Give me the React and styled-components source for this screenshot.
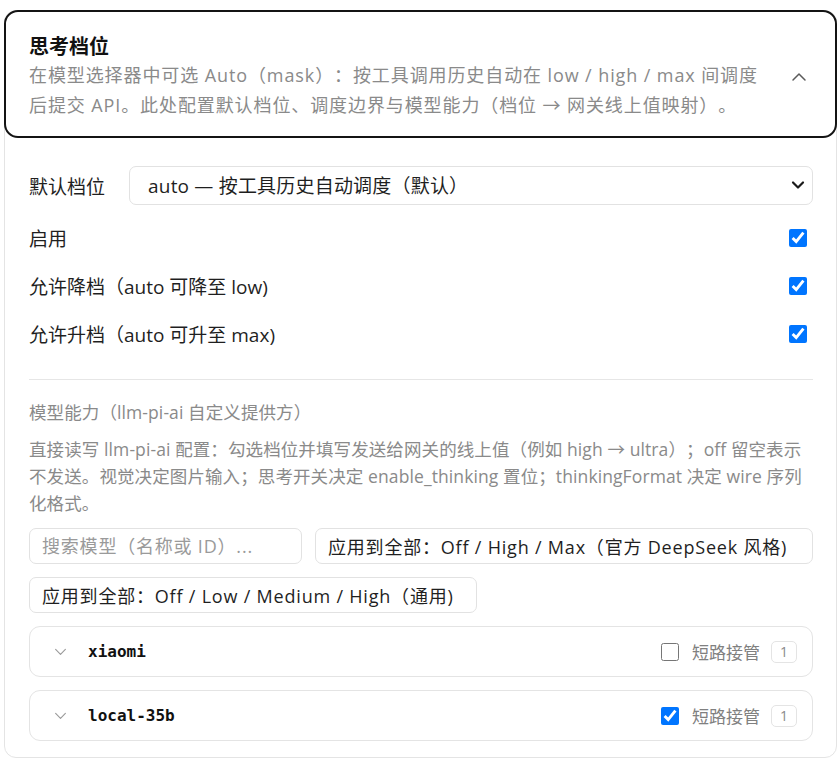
import React from 'react'
import styled, { createGlobalStyle } from 'styled-components'

const GlobalStyle = createGlobalStyle`
  body {
    margin: 0;
    background: #fff;
    font-family: "Open Sans", "Noto Sans CJK SC", sans-serif;
    color: #1f1f1f;
    text-spacing-trim: space-all;
  }
  * { box-sizing: border-box; }
`

const Page = styled.div`
  padding: 10px 3px 5px 4px;
`

const Card = styled.section`
  border: 1px solid #e4e4e4;
  border-radius: 12px;
  background: #fff;
`

const Header = styled.button`
  display: flex;
  align-items: center;
  gap: 16px;
  width: calc(100% + 2px);
  margin: -1px -1px 0;
  padding: 22px 28px 16px 23px;
  border: 2px solid #141414;
  border-radius: 14px;
  background: #fff;
  text-align: left;
  font: inherit;
  text-spacing-trim: space-all;
  cursor: pointer;
`

const HeaderText = styled.div`
  flex: 1;
  min-width: 0;
`

const Title = styled.h2`
  margin: 0;
  font-size: 20px;
  line-height: 26px;
  font-weight: 700;
  color: #111;
`

const Muted = styled.p`
  margin: 0;
  color: #8a8a8a;
  font-size: ${p => p.size || 18}px;
  line-height: ${p => p.lh || 30}px;
  letter-spacing: ${p => p.track || 0}px;
`

const Body = styled.div`
  padding: 28px 23px 16px 24px;
`

const FieldRow = styled.div`
  display: flex;
  align-items: center;
  gap: 24px;
  margin-bottom: 9px;
`

const Label = styled.span`
  font-size: 19px;
  color: #1f1f1f;
  white-space: nowrap;
`

const SelectWrap = styled.div`
  position: relative;
  flex: 1;
`

const Select = styled.select`
  appearance: none;
  width: 100%;
  height: 39px;
  padding: 0 40px 0 18px;
  border: 1px solid #e2e2e2;
  border-radius: 7px;
  background: #fff;
  font: inherit;
  font-size: 19px;
  letter-spacing: 0.2px;
  color: #1f1f1f;
  outline: none;
`

const SelectArrow = styled.svg`
  position: absolute;
  right: 8px;
  top: 14px;
  pointer-events: none;
`

const CheckRow = styled.label`
  display: flex;
  align-items: center;
  justify-content: space-between;
  height: 48px;
  padding-right: 6px;
`

const Check = styled.input`
  width: 18px;
  height: 18px;
  margin: 0;
  accent-color: #0075ff;
`

const Divider = styled.hr`
  border: 0;
  border-top: 1px solid #e6e6e6;
  margin: 21px 0 19px;
`

const Description = styled(Muted)`
  margin: 11px 0 11px;
`

const Controls = styled.div`
  display: flex;
  flex-wrap: wrap;
  gap: 13px;
`

const SearchInput = styled.input`
  width: 273px;
  height: 36px;
  padding: 0 12px;
  border: 1px solid #e2e2e2;
  border-radius: 7px;
  font: inherit;
  font-size: 18px;
  letter-spacing: 0.8px;
  color: #1f1f1f;
  outline: none;

  &::placeholder {
    color: #9a9a9a;
  }
`

const Preset = styled.button`
  flex: ${p => (p.grow ? 1 : '0 0 auto')};
  height: 36px;
  padding: 0 22px 0 12px;
  border: 1px solid #e2e2e2;
  border-radius: 7px;
  background: #fff;
  font: inherit;
  font-size: 18px;
  letter-spacing: 0.8px;
  color: #1f1f1f;
  text-align: left;
  white-space: nowrap;
  cursor: pointer;
`

const Providers = styled.div`
  display: flex;
  flex-direction: column;
  gap: 13px;
  margin-top: 13px;
`

const Provider = styled.div`
  display: flex;
  align-items: center;
  height: 51px;
  padding: 0 15px 0 24px;
  border: 1px solid #e4e4e4;
  border-radius: 11px;
`

const Name = styled.span`
  flex: 1;
  margin-left: 21px;
  font-family: "DejaVu Sans Mono", "Liberation Mono", monospace;
  font-weight: 700;
  font-size: 16px;
  color: #111;
`

const Takeover = styled.label`
  display: flex;
  align-items: center;
  gap: 13px;
  font-size: 17px;
  color: #808080;
`

const Badge = styled.span`
  display: inline-flex;
  align-items: center;
  justify-content: center;
  width: 26px;
  height: 22px;
  margin-left: 11px;
  border: 1px solid #e4e4e4;
  border-radius: 5px;
  font-size: 14px;
  color: #8a8a8a;
`

const Chevron = ({ up, size = 16, color = '#555', width = 1.6 }) => (
  <svg width={size} height={size} viewBox="0 0 16 16" fill="none">
    <path
      d={up ? 'M2 11l6-6 6 6' : 'M2 5.5l6 6 6-6'}
      stroke={color}
      strokeWidth={width}
      strokeLinecap="round"
      strokeLinejoin="round"
    />
  </svg>
)

const providers = [
  { name: 'xiaomi', takeover: false, count: 1 },
  { name: 'local-35b', takeover: true, count: 1 },
]

const App = () => {
  return (
    <Page>
      <GlobalStyle />
      <Card>
        <Header type="button">
          <HeaderText>
            <Title>思考档位</Title>
            <Muted track={0.9}>
              在模型选择器中可选 Auto（mask）：按工具调用历史自动在 low / high / max 间调度后提交 API。此处配置默认档位、调度边界与模型能力（档位 → 网关线上值映射）。
            </Muted>
          </HeaderText>
          <Chevron up size={16} color="#5a5a5a" width={1.5} />
        </Header>

        <Body>
          <FieldRow>
            <Label>默认档位</Label>
            <SelectWrap>
              <Select defaultValue="auto">
                <option value="auto">auto — 按工具历史自动调度（默认）</option>
                <option value="low">low</option>
                <option value="high">high</option>
                <option value="max">max</option>
              </Select>
              <SelectArrow width="14" height="10" viewBox="0 0 14 10" fill="none">
                <path d="M2 2.5l5 5 5-5" stroke="#1a1a1a" strokeWidth="2.2" strokeLinecap="round" strokeLinejoin="round" />
              </SelectArrow>
            </SelectWrap>
          </FieldRow>

          <CheckRow>
            <Label>启用</Label>
            <Check type="checkbox" defaultChecked />
          </CheckRow>
          <CheckRow>
            <Label>允许降档（auto 可降至 low)</Label>
            <Check type="checkbox" defaultChecked />
          </CheckRow>
          <CheckRow>
            <Label>允许升档（auto 可升至 max)</Label>
            <Check type="checkbox" defaultChecked />
          </CheckRow>

          <Divider />

          <Muted size={17.5} lh={26} track={0.1}>模型能力（llm-pi-ai 自定义提供方）</Muted>
          <Description size={17.5} lh={27} track={0.1}>
            直接读写 llm-pi-ai 配置：勾选档位并填写发送给网关的线上值（例如 high → ultra）；off 留空表示不发送。视觉决定图片输入；思考开关决定 enable_thinking 置位；thinkingFormat 决定 wire 序列化格式。
          </Description>

          <Controls>
            <SearchInput placeholder="搜索模型（名称或 ID）..." />
            <Preset grow>应用到全部：Off / High / Max（官方 DeepSeek 风格)</Preset>
            <Preset>应用到全部：Off / Low / Medium / High（通用)</Preset>
          </Controls>

          <Providers>
            {providers.map(p => (
              <Provider key={p.name}>
                <Chevron size={13} color="#9a9a9a" width={1.4} />
                <Name>{p.name}</Name>
                <Takeover>
                  <Check type="checkbox" defaultChecked={p.takeover} />
                  短路接管
                </Takeover>
                <Badge>{p.count}</Badge>
              </Provider>
            ))}
          </Providers>
        </Body>
      </Card>
    </Page>
  )
}

export default App
